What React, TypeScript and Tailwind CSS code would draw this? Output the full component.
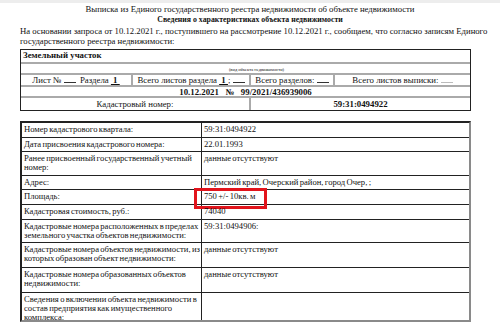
import React from "react";

type Row = { label: React.ReactNode; value: React.ReactNode; h: string; mark?: boolean };

const rows: Row[] = [
  { label: "Номер кадастрового квартала:", value: "59:31:0494922", h: "h-[14px]" },
  { label: "Дата присвоения кадастрового номера:", value: "22.01.1993", h: "h-[14px]" },
  {
    label: (
      <>
        Ранее присвоенный государственный учетный
        <br />
        номер:
      </>
    ),
    value: "данные отсутствуют",
    h: "h-[24px]",
  },
  { label: "Адрес:", value: "Пермский край, Очерский район, город Очер, ;", h: "h-[14px]" },
  { label: "Площадь:", value: "750 +/- 10кв. м", h: "h-[15px]", mark: true },
  { label: "Кадастровая стоимость, руб.:", value: "74040", h: "h-[15px]" },
  {
    label: (
      <>
        Кадастровые номера расположенных в пределах
        <br />
        земельного участка объектов недвижимости:
      </>
    ),
    value: "59:31:0494906:",
    h: "h-[23px]",
  },
  {
    label: (
      <>
        Кадастровые номера объектов недвижимости, из
        <br />
        которых образован объект недвижимости:
      </>
    ),
    value: "данные отсутствуют",
    h: "h-[25px]",
  },
  {
    label: (
      <>
        Кадастровые номера образованных объектов
        <br />
        недвижимости:
      </>
    ),
    value: "данные отсутствуют",
    h: "h-[25px]",
  },
  {
    label: (
      <>
        Сведения о включении объекта недвижимости в
        <br />
        состав предприятия как имущественного
        <br />
        комплекса:
      </>
    ),
    value: "",
    h: "h-[28px]",
  },
];

export default function App() {
  return (
    <div
      className="w-[500px] h-[326px] bg-white overflow-hidden text-[9px] leading-[10px] text-[#111]"
      style={{ fontFamily: '"Liberation Serif", "Times New Roman", serif' }}
    >
      <div className="h-[3px] bg-[#ededed]" />

      <div className="mt-[1px] text-center text-[8.7px]">
        Выписка из Единого государственного реестра недвижимости об объекте недвижимости
      </div>
      <div className="text-center font-bold mt-[1px] text-[7.8px]">
        Сведения о характеристиках объекта недвижимости
      </div>
      <div className="pl-[20px] pr-[8px] mt-[1px] text-[8.7px] whitespace-nowrap">
        На основании запроса от 10.12.2021 г., поступившего на рассмотрение 10.12.2021 г., сообщаем, что согласно записям Единого
        <br />
        государственного реестра недвижимости:
      </div>

      {/* шапка */}
      <div className="ml-[20px] mt-[3px] w-[451px] border-[1.5px] border-[#222] box-border text-[8.8px]">
        <div className="h-[12px] pl-[2px] font-bold">Земельный участок</div>
        <div className="h-[11px] border-t-2 border-[#aaa] flex justify-center">
          <span className="text-[4.5px] leading-[7px] mt-[2px] ml-[22px]">(вид объекта недвижимости)</span>
        </div>
        <div className="h-[12px] border-t-2 border-[#aaa] flex">
          <div className="w-[112px] border-r-2 border-[#aaa] text-center">
            Лист № <span className="inline-block w-[12px] border-b border-[#333] h-[8px]" />
            &nbsp;&nbsp;Раздела <span className="underline font-bold">&nbsp;1&nbsp;</span>
          </div>
          <div className="w-[118px] border-r-2 border-[#aaa] text-center">
            Всего листов раздела <span className="underline font-bold">&nbsp;1&nbsp;</span>;{" "}
            <span className="inline-block w-[12px] border-b border-[#333] h-[8px]" />
          </div>
          <div className="w-[84px] border-r-2 border-[#aaa] text-center">
            Всего разделов: <span className="inline-block w-[12px] border-b border-[#333] h-[8px]" />
          </div>
          <div className="flex-1 text-center">
            Всего листов выписки: <span className="inline-block w-[12px] border-b border-[#bbb] h-[8px]" />
          </div>
        </div>
        <div className="h-[11px] border-t-2 border-[#aaa] text-center font-bold">
          10.12.2021&nbsp;&nbsp;&nbsp;№&nbsp;&nbsp;&nbsp;99/2021/436939006
        </div>
        <div className="h-[14px] border-t-2 border-[#aaa] flex">
          <div className="w-[230px] border-r-2 border-[#aaa] text-center pt-[1px]">Кадастровый номер:</div>
          <div className="flex-1 text-center font-bold pt-[1px]">59:31:0494922</div>
        </div>
      </div>

      {/* характеристики */}
      <div className="ml-[20px] mt-[10px] w-[451px] border-t-2 border-l-2 border-[#222] border-r-2 border-b-2 border-r-[#8a8a8a] border-b-[#8a8a8a] box-border text-[8.6px] leading-[9px] [word-spacing:-0.8px]">
        {rows.map((r, i) => (
          <div key={i} className={`flex box-border ${r.h} ${i > 0 ? "border-t border-[#222]" : ""}`}>
            <div className="w-[180px] border-r border-[#222] pl-[2px] pt-[1.5px] whitespace-nowrap">
              {r.label}
            </div>
            <div className="flex-1 pl-[2px] pt-[1.5px] relative">
              {r.value}
              {r.mark && (
                <div className="absolute left-[-8px] top-[-2px] w-[73px] h-[21px] border-[3px] border-[#e2141c]" />
              )}
            </div>
          </div>
        ))}
      </div>
    </div>
  );
}
